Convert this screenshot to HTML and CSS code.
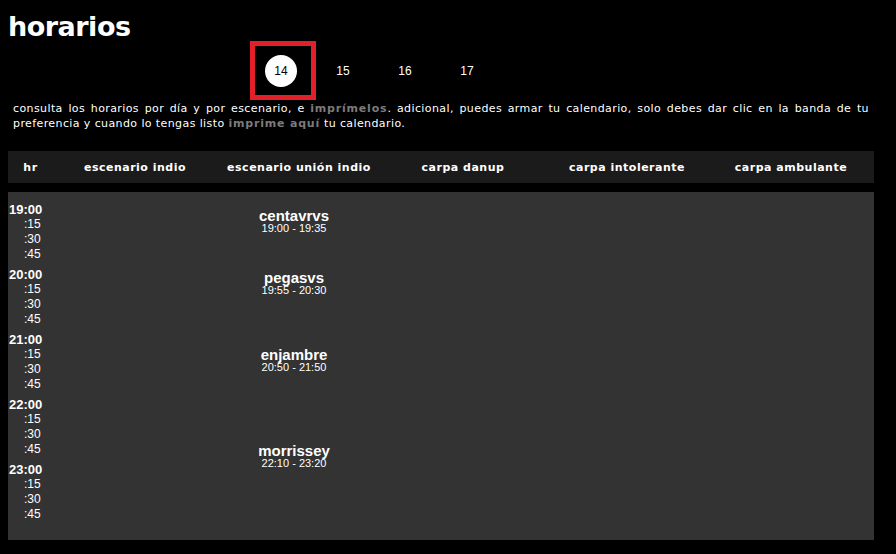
FILE: index.html
```html
<!DOCTYPE html>
<html lang="es">
<head>
<meta charset="utf-8">
<meta name="viewport" content="width=device-width,initial-scale=1">
<title>horarios</title>
<link rel="stylesheet" href="styles.css">
</head>
<body>
<div class="page">
  <h1>horarios</h1>

  <!-- dias del festival -->
  <ul class="days">
    <li class="day on"><span>14</span></li>
    <li class="day"><span>15</span></li>
    <li class="day"><span>16</span></li>
    <li class="day"><span>17</span></li>
  </ul>

  <p class="intro">consulta los horarios por día y por escenario, e <a href="#">imprímelos</a>. adicional, puedes armar tu calendario, solo debes dar clic en la banda de tu preferencia y cuando lo tengas listo <a href="#">imprime aquí</a> tu calendario.</p>

  <div class="grid head">
    <div>hr</div>
    <div>escenario indio</div>
    <div>escenario unión indio</div>
    <div>carpa danup</div>
    <div>carpa intolerante</div>
    <div>carpa ambulante</div>
  </div>

  <div class="grid sched">
    <div class="hours">
      <div class="hblock"><div class="h">19:00</div><div class="q">:15</div><div class="q">:30</div><div class="q">:45</div></div>
      <div class="hblock"><div class="h">20:00</div><div class="q">:15</div><div class="q">:30</div><div class="q">:45</div></div>
      <div class="hblock"><div class="h">21:00</div><div class="q">:15</div><div class="q">:30</div><div class="q">:45</div></div>
      <div class="hblock"><div class="h">22:00</div><div class="q">:15</div><div class="q">:30</div><div class="q">:45</div></div>
      <div class="hblock"><div class="h">23:00</div><div class="q">:15</div><div class="q">:30</div><div class="q">:45</div></div>
    </div>
    <div class="stage"></div>
    <div class="stage">
      <!-- top/height = minutos desde 19:00 -->
      <div class="band" style="top:9px;height:40px"><b>centavrvs</b><span>19:00 - 19:35</span></div>
      <div class="band" style="top:71px;height:40px"><b>pegasvs</b><span>19:55 - 20:30</span></div>
      <div class="band" style="top:134px;height:68px"><b>enjambre</b><span>20:50 - 21:50</span></div>
      <div class="band" style="top:224px;height:80px"><b>morrissey</b><span>22:10 - 23:20</span></div>
    </div>
    <div class="stage"></div>
    <div class="stage"></div>
    <div class="stage"></div>
  </div>
</div>
</body>
</html>
```

FILE: styles.css
```css
*{box-sizing:border-box}
body{margin:8px;background:#000;color:#fff;font-family:"Liberation Sans",Arial,sans-serif}
.page{width:866px}
h1{margin:0;font:bold 27px/28px "DejaVu Sans",sans-serif;letter-spacing:-.5px;padding-top:5px}
.days{list-style:none;margin:0 0 0 242px;padding:0;display:flex}
.day{width:62px;height:59px;border:5px solid transparent;display:flex;align-items:center;justify-content:center;font-size:12px}
.day.on{border-color:#e1202a;width:66px;margin-right:-4px;padding-right:4px}
.day span{width:32px;height:32px;line-height:32px;text-align:center;border-radius:50%}
.day.on span{background:#fff;color:#000}
.intro{margin:1px 0 0;padding:0 5px;font:11px/15px "DejaVu Sans",sans-serif;letter-spacing:.4px;text-align:justify}
.intro a{color:#7b7b7b;font-weight:bold;text-decoration:none;letter-spacing:.8px}
.grid{display:grid;grid-template-columns:45px repeat(5,164px)}
.head{margin-top:20px;height:32px;background:#1b1b1b;align-items:center;text-align:center;font:bold 11px "DejaVu Sans",sans-serif;letter-spacing:.5px}
.sched{margin-top:9px;height:348px;background:#333;padding-top:5px}
.hours{padding-left:1px}
.hblock{height:65px}
.h{padding-top:5px;line-height:15px;font-size:13px;font-weight:bold}
.q{line-height:15px;font-size:12px;padding-left:15px}
.stage{position:relative;margin-top:-5px}
.band{position:absolute;left:0;right:10px;display:flex;flex-direction:column;align-items:center;justify-content:center;cursor:pointer}
.band b{font-size:15px;line-height:13px}
.band span{font-size:11px;line-height:12px}
```
